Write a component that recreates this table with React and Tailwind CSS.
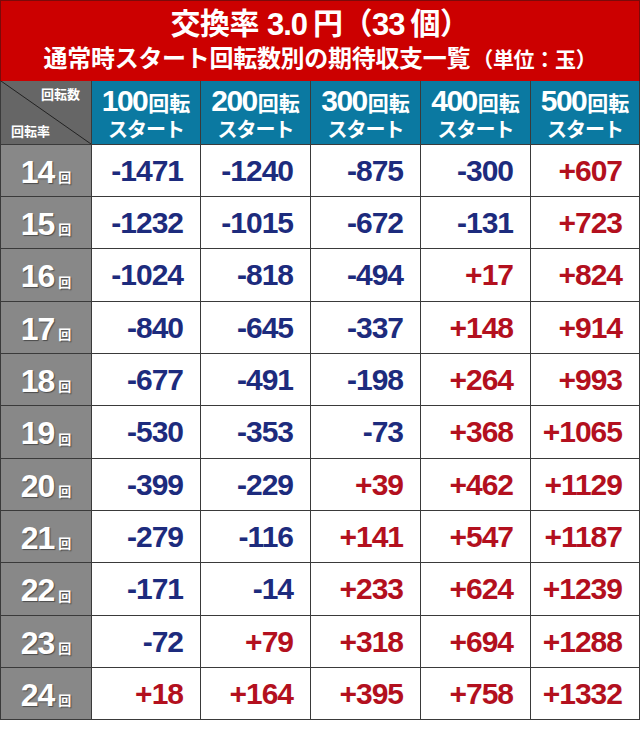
import React from "react";

const cols = [100, 200, 300, 400, 500];
const data = [
  [14, [-1471, -1240, -875, -300, 607]],
  [15, [-1232, -1015, -672, -131, 723]],
  [16, [-1024, -818, -494, 17, 824]],
  [17, [-840, -645, -337, 148, 914]],
  [18, [-677, -491, -198, 264, 993]],
  [19, [-530, -353, -73, 368, 1065]],
  [20, [-399, -229, 39, 462, 1129]],
  [21, [-279, -116, 141, 547, 1187]],
  [22, [-171, -14, 233, 624, 1239]],
  [23, [-72, 79, 318, 694, 1288]],
  [24, [18, 164, 395, 758, 1332]],
];

const font = { fontFamily: '"Liberation Sans", "Noto Sans CJK JP", sans-serif' };

export default function App() {
  return (
    <div className="w-[640px] h-[731px] bg-white font-bold" style={font}>
      <div className="h-[81px] bg-[#cc0000] border-t border-l border-r border-[#7a0a0a] flex flex-col items-center text-white">
        <div className="mt-[4px] h-[38px] flex items-center text-[30px] leading-none tracking-[-0.5px]">
          <span>交換率</span>
          <span className="ml-[8px] text-[31px] tracking-[-1px]">3.0</span>
          <span className="ml-[6px]">円</span>
          <span>（</span>
          <span className="text-[31px] tracking-[-1px]">33</span>
          <span className="ml-[6px]">個）</span>
        </div>
        <div className="h-[32px] flex items-center leading-none tracking-[-0.3px]">
          <span className="text-[24px]">通常時スタート回転数別の期待収支一覧</span>
          <span className="text-[21px] ml-[2px]">（単位：玉）</span>
        </div>
      </div>
      <div className="grid grid-cols-[90px_108px_109px_109px_109px_108px] grid-rows-[63px_51px_51px_52px_51px_51px_52px_51px_51px_52px_51px_51px] gap-px p-px pt-0 bg-[#3a3a3a]">
        <div className="relative bg-[#666666] text-white text-[13px] leading-none">
          <svg className="absolute inset-0" width="90" height="63" viewBox="0 0 90 63">
            <line x1="0" y1="0" x2="90" y2="63" stroke="#222" strokeWidth="1" />
          </svg>
          <span className="absolute left-[40px] top-[7px]">回転数</span>
          <span className="absolute left-[10px] top-[44px]">回転率</span>
        </div>
        {cols.map((c) => (
          <div key={c} className="bg-[#0b79a1] text-white flex flex-col items-center justify-center leading-none pt-[1px]">
            <div className="flex items-baseline">
              <span className="text-[30px] tracking-[-1.5px]">{c}</span>
              <span className="text-[21px] ml-[1px]">回転</span>
            </div>
            <div className="text-[20px] mt-[4px] tracking-[-1px]">スタート</div>
          </div>
        ))}
        {data.map(([r, vals]) => (
          <React.Fragment key={r}>
            <div className="bg-[#888888] text-white flex items-center justify-center pt-[2px] [text-shadow:1px_1px_1px_rgba(0,0,0,0.45)]">
              <span className="text-[32px] leading-none tracking-[-1px]">{r}</span>
              <span className="text-[13px] leading-none ml-[4px] self-end mb-[12px]">回</span>
            </div>
            {vals.map((v, i) => (
              <div
                key={i}
                className={`bg-white flex items-center justify-end pr-[17px] text-[30px] leading-none tracking-[-1px] ${
                  v < 0 ? "text-[#1d2b7d]" : "text-[#b3101e]"
                }`}
              >
                {v < 0 ? `-${Math.abs(v)}` : `+${v}`}
              </div>
            ))}
          </React.Fragment>
        ))}
      </div>
    </div>
  );
}
